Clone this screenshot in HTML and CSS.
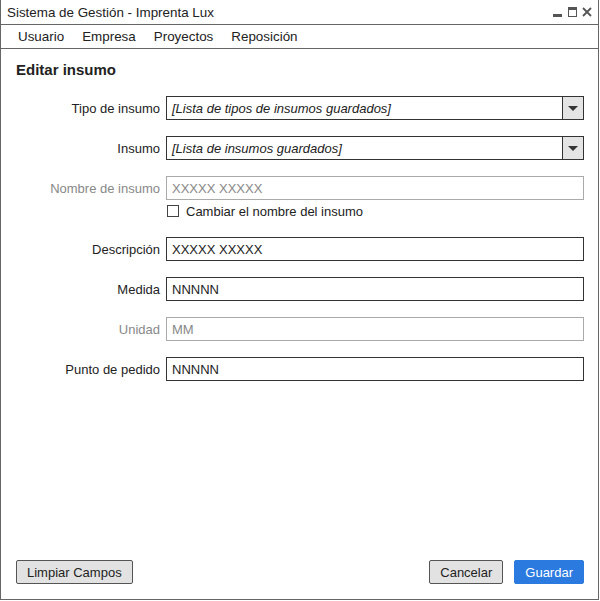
FILE: index.html
```html
<!DOCTYPE html>
<html>
<head>
<meta charset="utf-8">
<link rel="stylesheet" href="styles.css">
</head>
<body>
<div class="window">
  <div class="titlebar">
    <span class="title">Sistema de Gestión - Imprenta Lux</span>
    <div class="controls">
      <svg width="40" height="12" viewBox="0 0 40 12">
        <rect x="1" y="7" width="9" height="3" fill="#555"/>
        <rect x="16.5" y="0.5" width="8" height="9" fill="none" stroke="#555"/>
        <rect x="16" y="0" width="9" height="3" fill="#555"/>
        <path d="M31 1 L39 9 M39 1 L31 9" stroke="#555" stroke-width="1.8"/>
      </svg>
    </div>
  </div>
  <div class="menubar">
    <span>Usuario</span><span>Empresa</span><span>Proyectos</span><span>Reposición</span>
  </div>
  <div class="content">
    <h1>Editar insumo</h1>
    <div class="form">
      <div class="row">
        <label>Tipo de insumo</label>
        <div class="field select"><span class="ph">[Lista de tipos de insumos guardados]</span><span class="arrow"></span></div>
      </div>
      <div class="row">
        <label>Insumo</label>
        <div class="field select"><span class="ph">[Lista de insumos guardados]</span><span class="arrow"></span></div>
      </div>
      <div class="row disabled first">
        <label>Nombre de insumo</label>
        <div class="field">XXXXX XXXXX</div>
      </div>
      <div class="checkrow">
        <span class="box"></span><span>Cambiar el nombre del insumo</span>
      </div>
      <div class="row">
        <label>Descripción</label>
        <div class="field">XXXXX XXXXX</div>
      </div>
      <div class="row">
        <label>Medida</label>
        <div class="field">NNNNN</div>
      </div>
      <div class="row disabled">
        <label>Unidad</label>
        <div class="field">MM</div>
      </div>
      <div class="row">
        <label>Punto de pedido</label>
        <div class="field">NNNNN</div>
      </div>
    </div>
    <div class="footer">
      <button class="btn">Limpiar Campos</button>
      <div class="right">
        <button class="btn">Cancelar</button>
        <button class="btn primary">Guardar</button>
      </div>
    </div>
  </div>
</div>
</body>
</html>
```
FILE: styles.css
```css
html, body { margin: 0; padding: 0; background: #fff; }
body {
  font-family: "Liberation Sans", Arial, sans-serif;
  font-size: 13px;
  color: #222;
}
.window {
  box-sizing: border-box;
  width: 599px;
  height: 600px;
  border: 1px solid #666;
  border-top: none;
  display: flex;
  flex-direction: column;
}
.titlebar {
  height: 25px;
  border-bottom: 1px solid #666;
  display: flex;
  align-items: center;
  justify-content: space-between;
  padding: 0 6px 0 6px;
  box-sizing: border-box;
}
.title { font-size: 13.4px; color: #222; padding-top: 1px; }
.controls svg { display: block; margin-top: 1px; }
.menubar {
  height: 24px;
  border-bottom: 1px solid #666;
  display: flex;
  align-items: center;
  gap: 18px;
  padding-left: 17px;
  box-sizing: border-box;
  font-size: 13.4px;
}
.content {
  flex: 1;
  display: flex;
  flex-direction: column;
  padding: 0 14px 15px 15px;
}
h1 {
  margin: 12px 0 0 0;
  font-size: 15px;
  font-weight: bold;
  height: 18px;
  line-height: 18px;
  color: #222;
}
.form {
  margin-top: 17px;
  display: flex;
  flex-direction: column;
}
.row {
  display: flex;
  align-items: center;
  height: 24px;
  margin-bottom: 16px;
}
.row label {
  width: 144px;
  text-align: right;
  padding-right: 6px;
  flex: none;
}
.field {
  flex: 1;
  box-sizing: border-box;
  height: 24px;
  border: 1px solid #333;
  display: flex;
  align-items: center;
  padding-left: 5px;
  background: #fff;
}
.ph { font-style: italic; flex: 1; }
.arrow {
  width: 20px;
  height: 22px;
  border-left: 1px solid #333;
  background: #e4e4e4;
  position: relative;
}
.arrow::after {
  content: "";
  position: absolute;
  left: 5px;
  top: 9px;
  border-left: 5px solid transparent;
  border-right: 5px solid transparent;
  border-top: 5px solid #333;
}
.row.disabled label { color: #888; }
.row.disabled .field { border-color: #aaa; color: #888; }
.row.first { margin-bottom: 4px; }
.checkrow {
  display: flex;
  align-items: center;
  margin-left: 151px;
  height: 14px;
  margin-bottom: 19px;
  gap: 7px;
}
.box {
  width: 10px;
  height: 10px;
  border: 1px solid #444;
  display: inline-block;
}
.footer {
  margin-top: auto;
  display: flex;
  justify-content: space-between;
  align-items: center;
}
.right { display: flex; gap: 11px; }
.btn {
  font-family: inherit;
  font-size: 13px;
  height: 24px;
  padding: 0 10px;
  background: #e2e2e2;
  border: 1px solid #555;
  border-radius: 2px;
  color: #222;
}
.btn.primary {
  background: #2b7ae0;
  border-color: #2b7ae0;
  color: #fff;
}
```
